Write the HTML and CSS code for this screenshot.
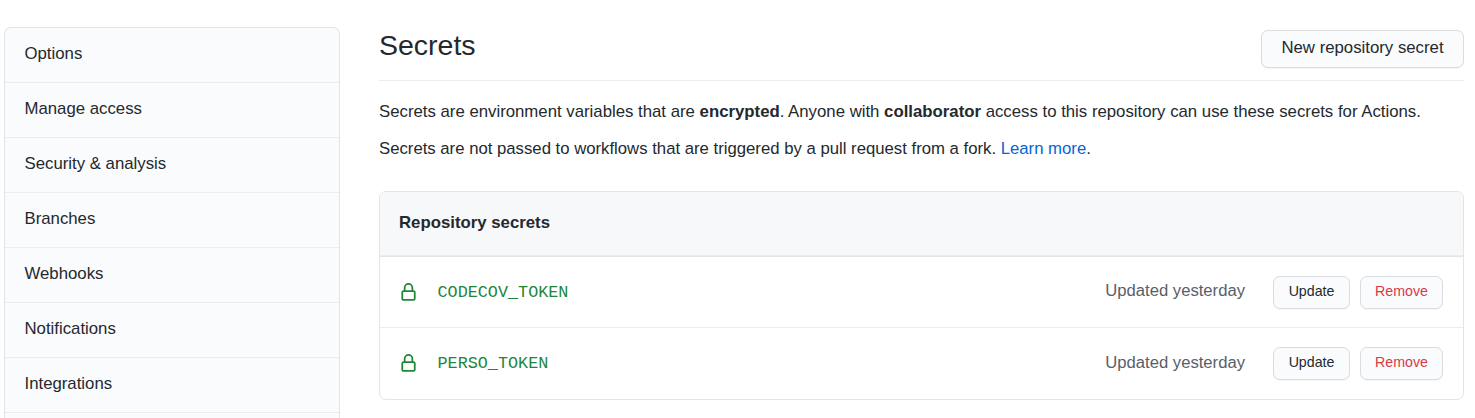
FILE: index.html
```html
<!DOCTYPE html>
<html lang="en">
<head>
<meta charset="utf-8">
<title>Secrets</title>
<link rel="stylesheet" href="styles.css">
</head>
<body>
<div class="layout">
  <nav class="menu">
    <a class="menu-item">Options</a>
    <a class="menu-item">Manage access</a>
    <a class="menu-item">Security &amp; analysis</a>
    <a class="menu-item">Branches</a>
    <a class="menu-item">Webhooks</a>
    <a class="menu-item">Notifications</a>
    <a class="menu-item">Integrations</a>
  </nav>
  <main class="content">
    <header class="subhead">
      <h1 class="title">Secrets</h1>
      <button class="btn btn-new">New repository secret</button>
    </header>
    <p class="note">Secrets are environment variables that are <strong>encrypted</strong>. Anyone with <strong>collaborator</strong> access to this repository can use these secrets for Actions.</p>
    <p class="note note-fork">Secrets are not passed to workflows that are triggered by a pull request from a fork. <a class="link">Learn more</a>.</p>
    <section class="box">
      <h2 class="box-head">Repository secrets</h2>
      <div class="row">
        <svg class="lock" viewBox="0 0 16 16"><path fill-rule="evenodd" d="M4 4v2h-.25A1.75 1.75 0 002 7.75v5.5c0 .966.784 1.75 1.75 1.75h8.5A1.75 1.75 0 0014 13.25v-5.5A1.75 1.75 0 0012.25 6H12V4a4 4 0 10-8 0zm6.5 2V4a2.5 2.5 0 00-5 0v2h5zM12 7.5h.25a.25.25 0 01.25.25v5.5a.25.25 0 01-.25.25h-8.5a.25.25 0 01-.25-.25v-5.5a.25.25 0 01.25-.25H12z"/></svg>
        <code class="name">CODECOV_TOKEN</code>
        <span class="updated">Updated yesterday</span>
        <button class="btn btn-sm btn-update">Update</button>
        <button class="btn btn-sm btn-remove">Remove</button>
      </div>
      <div class="row row-last">
        <svg class="lock" viewBox="0 0 16 16"><path fill-rule="evenodd" d="M4 4v2h-.25A1.75 1.75 0 002 7.75v5.5c0 .966.784 1.75 1.75 1.75h8.5A1.75 1.75 0 0014 13.25v-5.5A1.75 1.75 0 0012.25 6H12V4a4 4 0 10-8 0zm6.5 2V4a2.5 2.5 0 00-5 0v2h5zM12 7.5h.25a.25.25 0 01.25.25v5.5a.25.25 0 01-.25.25h-8.5a.25.25 0 01-.25-.25v-5.5a.25.25 0 01.25-.25H12z"/></svg>
        <code class="name">PERSO_TOKEN</code>
        <span class="updated">Updated yesterday</span>
        <button class="btn btn-sm btn-update">Update</button>
        <button class="btn btn-sm btn-remove">Remove</button>
      </div>
    </section>
  </main>
</div>
</body>
</html>
```
FILE: styles.css
```css
* { box-sizing: border-box; }
body {
  margin: 0;
  background: #fff;
  color: #24292e;
  font: 16.77px/24px "Nimbus Sans", "Liberation Sans", Arial, sans-serif;
}
.layout {
  display: flex;
  align-items: flex-start;
  gap: 39px;
  height: 418px;
  padding: 27px 11px 0 4px;
}
.menu {
  width: 336px;
  height: 391px;
  flex: none;
  border: 1px solid #e1e4e8;
  border-bottom: 0;
  border-radius: 7px 7px 0 0;
  background: #fafbfc;
}
.menu-item {
  display: block;
  height: 55px;
  padding: 14px 19px 0 19.5px;
  border-bottom: 1px solid #eaecef;
}
.content { flex: 1; }
.subhead {
  display: flex;
  justify-content: space-between;
  align-items: flex-start;
  height: 54px;
  padding-top: 3px;
  border-bottom: 1px solid #eaecef;
}
.title {
  margin: 0;
  font-size: 28.5px;
  line-height: 30px;
  font-weight: 400;
}
.btn {
  flex: none;
  padding: 0;
  border: 1px solid #d9dce0;
  border-radius: 7px;
  background: #fafbfc;
  color: #24292e;
  font-family: inherit;
  box-shadow: 0 1px 0 rgba(27, 31, 35, .04);
}
.btn-new {
  width: 203px;
  height: 38px;
  padding-bottom: 3px;
  font-size: 16.77px;
}
.note { margin: 19px 0 0; white-space: nowrap; }
.note-fork { margin-top: 13px; font-size: 16.73px; }
.link { color: #0366d6; }
.box {
  height: 209px;
  margin-top: 30px;
  border: 1px solid #e1e4e8;
  border-radius: 7px;
  overflow: hidden;
}
.box-head {
  height: 64px;
  margin: 0;
  padding: 19px 19px 0;
  border-bottom: 1px solid #eaecef;
  background: #f6f8fa;
  font-size: 16.77px;
  line-height: 24px;
}
.row {
  display: flex;
  align-items: center;
  height: 71px;
  padding: 0 20px 0 19px;
  border-top: 1px solid #e1e4e8;
}
.row-last { height: 72px; border-top-color: #eaecef; }
.lock { width: 19px; height: 19px; fill: #22863a; }
.name {
  margin: 2px 0 0 19.5px;
  color: #22863a;
  font: 16.8px/24px "Liberation Mono", monospace;
}
.row-last .name { margin-top: 0; }
.updated {
  margin: 0 28px 2px auto;
  color: #586069;
  font-size: 16.65px;
}
.row-last .updated { margin-bottom: 1px; }
.btn-sm {
  height: 33px;
  padding-bottom: 3px;
  font-size: 14.2px;
}
.btn-update { width: 77px; }
.btn-remove { width: 83px; margin-left: 10px; color: #d73a49; }
```
